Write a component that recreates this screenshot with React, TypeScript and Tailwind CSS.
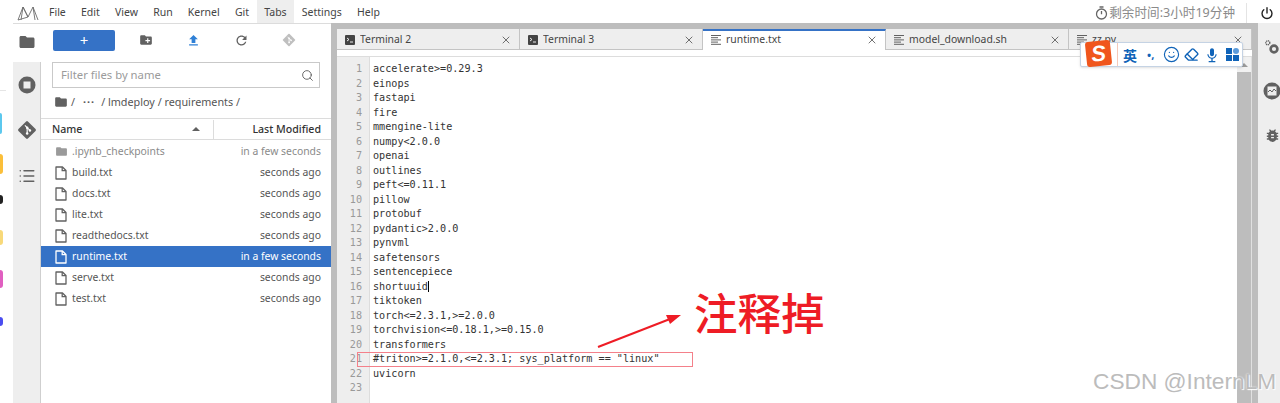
import { Eraser, List, Search, Smile, X } from 'lucide-react';

const sans = '[font-family:"Noto_Sans","Noto_Sans_CJK_SC",sans-serif]';

const menus = ['File', 'Edit', 'View', 'Run', 'Kernel', 'Git', 'Tabs', 'Settings', 'Help'];

const files = [
  { name: '.ipynb_checkpoints', time: 'in a few seconds', folder: true },
  { name: 'build.txt', time: 'seconds ago' },
  { name: 'docs.txt', time: 'seconds ago' },
  { name: 'lite.txt', time: 'seconds ago' },
  { name: 'readthedocs.txt', time: 'seconds ago' },
  { name: 'runtime.txt', time: 'in a few seconds', active: true },
  { name: 'serve.txt', time: 'seconds ago' },
  { name: 'test.txt', time: 'seconds ago' },
];

const lines = [
  'accelerate>=0.29.3', 'einops', 'fastapi', 'fire', 'mmengine-lite', 'numpy<2.0.0', 'openai', 'outlines',
  'peft<=0.11.1', 'pillow', 'protobuf', 'pydantic>2.0.0', 'pynvml', 'safetensors', 'sentencepiece', 'shortuuid',
  'tiktoken', 'torch<=2.3.1,>=2.0.0', 'torchvision<=0.18.1,>=0.15.0', 'transformers',
  '#triton>=2.1.0,<=2.3.1; sys_platform == "linux"', 'uvicorn', '',
];

const tabs = [
  { name: 'Terminal 2', terminal: true },
  { name: 'Terminal 3', terminal: true },
  { name: 'runtime.txt', active: true },
  { name: 'model_download.sh' },
  { name: 'zz.py' },
];

function Mat({ d, size = 16, className = '' }: { d: string; size?: number; className?: string }) {
  return (
    <svg width={size} height={size} viewBox="0 0 24 24" fill="currentColor" className={className}>
      <path d={d} />
    </svg>
  );
}

const folderPath = 'M10 4H4c-1.1 0-1.99.9-1.99 2L2 18c0 1.1.9 2 2 2h16c1.1 0 2-.9 2-2V8c0-1.1-.9-2-2-2h-8l-2-2z';
const newFolderPath = 'M20 6h-8l-2-2H4c-1.11 0-1.99.89-1.99 2L2 18c0 1.11.89 2 2 2h16c1.11 0 2-.89 2-2V8c0-1.11-.89-2-2-2zm-1 8h-3v3h-2v-3h-3v-2h3V9h2v3h3v2z';
const uploadPath = 'M9 16h6v-6h4l-7-7-7 7h4zm-4 2h14v2H5z';
const refreshPath = 'M17.65 6.35C16.2 4.9 14.21 4 12 4c-4.42 0-7.99 3.58-7.99 8s3.57 8 7.99 8c3.73 0 6.84-2.55 7.73-6h-2.08c-.82 2.33-3.04 4-5.65 4-3.31 0-6-2.69-6-6s2.69-6 6-6c1.66 0 3.14.69 4.22 1.78L13 11h7V4l-2.35 2.35z';
const bugPath = 'M20 8h-2.81c-.45-.78-1.07-1.45-1.82-1.96L17 4.41 15.59 3l-2.17 2.17C12.96 5.06 12.49 5 12 5c-.49 0-.96.06-1.41.17L8.41 3 7 4.41l1.62 1.63C7.88 6.55 7.26 7.22 6.81 8H4v2h2.09c-.05.33-.09.66-.09 1v1H4v2h2v1c0 .34.04.67.09 1H4v2h2.81c1.04 1.79 2.97 3 5.19 3s4.15-1.21 5.19-3H20v-2h-2.09c.05-.33.09-.66.09-1v-1h2v-2h-2v-1c0-.34-.04-.67-.09-1H20V8zm-6 8h-4v-2h4v2zm0-4h-4v-2h4v2z';
const micPath = 'M12 14c1.66 0 3-1.34 3-3V5c0-1.66-1.34-3-3-3S9 3.34 9 5v6c0 1.66 1.34 3 3 3zm5.3-3c0 3-2.54 5.1-5.3 5.1S6.7 14 6.7 11H5c0 3.41 2.72 6.23 6 6.72V21H7v2h10v-2h-4v-3.28c3.28-.49 6-3.31 6-6.72h-1.7z';

function GitIcon({ size = 20, color = '#616161' }: { size?: number; color?: string }) {
  return (
    <svg width={size} height={size} viewBox="0 0 24 24">
      <rect x="4" y="4" width="16" height="16" rx="1.5" fill={color} transform="rotate(45 12 12)" />
      <path d="M9.5 6.5l6 6M12.2 9.2v7" stroke="#fff" strokeWidth="1.4" />
      <circle cx="12.2" cy="9.2" r="1.5" fill="#fff" />
      <circle cx="15.5" cy="12.5" r="1.5" fill="#fff" />
      <circle cx="12.2" cy="16.2" r="1.5" fill="#fff" />
    </svg>
  );
}

function FileIcon({ active }: { active?: boolean }) {
  return (
    <svg width="12" height="14" viewBox="0 0 12 14" fill="none" stroke={active ? '#fff' : '#616161'} strokeWidth="1.3" className="shrink-0">
      <path d="M1 1h6.5L11 4.5V13H1z" strokeLinejoin="round" />
      <path d="M7.2 1v3.6H11" />
    </svg>
  );
}

function LinesIcon() {
  return (
    <svg width="10" height="10" viewBox="0 0 10 10" stroke="#616161" strokeWidth="1" className="shrink-0">
      <path d="M0 .5h10M0 2.7h7M0 4.9h10M0 7.1h7M0 9.3h10" />
    </svg>
  );
}

function TerminalIcon() {
  return (
    <svg width="10" height="10" viewBox="0 0 10 10" className="shrink-0">
      <rect width="10" height="10" rx="1" fill="#444" />
      <path d="M2 3l2 1.5L2 6M5 7h3" stroke="#fff" strokeWidth="0.9" fill="none" />
    </svg>
  );
}

function TabItem({ name, terminal, active }: { name: string; terminal?: boolean; active?: boolean }) {
  return (
    <div className={`flex h-[21px] w-[183px] shrink-0 items-center gap-[5px] border-r border-[#c4c4c4] pl-[8px] pr-[7px] text-[10.4px] ${active ? 'border-t-2 border-t-[#3572c6] bg-white pb-[1px]' : 'border-b border-b-[#c4c4c4] bg-[#eeeeee] pt-[1px]'}`}>
      {terminal ? <TerminalIcon /> : <LinesIcon />}
      <span className="flex-1 truncate text-[#444]">{name}</span>
      <X size={12} strokeWidth={1.5} className="text-[#444]" />
    </div>
  );
}

function Sogou() {
  return (
    <div className="absolute left-[1080px] top-[42px] flex h-[25px] w-[163px] items-center rounded-[2px] border border-[#c5d3e4] bg-white shadow-sm">
      <div className="-mt-[2px] ml-[5px] flex h-[25px] w-[25px] shrink-0 -rotate-6 items-center justify-center rounded-[3px] bg-[#f0561d] text-[22px] font-bold italic leading-none text-white [font-family:'Liberation_Sans',sans-serif]">S</div>
      <div className="ml-[6px] h-[23px] w-px shrink-0 bg-[#f5c9b8]" />
      <span className="ml-[5px] text-[14px] font-bold leading-none text-[#0f63b8] [font-family:'Noto_Sans_CJK_SC',sans-serif]">英</span>
      <span className="ml-[10px] w-[8px] text-[11px] font-bold leading-none text-[#0f63b8]">•,</span>
      <Smile size={17} strokeWidth={1.6} className="ml-[8px] shrink-0 text-[#0f63b8]" />
      <Eraser size={15} strokeWidth={2.2} className="ml-[4px] shrink-0 text-[#0f63b8]" />
      <Mat d={micPath} size={16} className="ml-[5px] shrink-0 text-[#0f63b8]" />
      <div className="ml-[6px] grid shrink-0 grid-cols-2 gap-px">
        <div className="h-[6px] w-[6px] bg-[#0f63b8]" />
        <div className="h-[6px] w-[6px] rounded-full bg-[#5b9bdb]" />
        <div className="h-[6px] w-[6px] bg-[#0f63b8]" />
        <div className="h-[6px] w-[6px] bg-[#0f63b8]" />
      </div>
    </div>
  );
}

export default function App() {
  return (
    <div className={`relative flex h-[403px] w-[1280px] overflow-hidden bg-white ${sans}`}>
      {/* desktop icons clipped at the edge */}
      <div className="flex w-[13px] shrink-0 flex-col items-start">
        <div className="mt-[90px] h-px w-[6px] bg-[#e5e5e5]" />
        <div className="mt-[22px] h-[21px] w-[2px] rounded-r bg-[#5cc8ee]" />
        <div className="mt-[20px] h-[20px] w-[3px] rounded-r bg-[#fbbf3a]" />
        <div className="mt-[21px] h-[9px] w-[3px] rounded-r bg-[#222]" />
        <div className="mt-[26px] h-[15px] w-[3px] rounded-r bg-[#f8d97a]" />
        <div className="mt-[25px] h-[18px] w-[3px] rounded-r bg-[#e05fc0]" />
        <div className="mt-[29px] h-[9px] w-[3px] rounded-r bg-[#4a4df0]" />
      </div>

      <div className="flex w-[1267px] shrink-0 flex-col">
        {/* top bar */}
        <div className="flex h-[23px] w-[1267px] shrink-0 items-center pr-[4px] text-[#9a9a9a]">
          <svg width="22" height="16" viewBox="0 0 22 16" fill="none" stroke="#6b6b6b" strokeWidth="0.9" className="ml-[4px] mt-[2px]">
            <path d="M1 15L6 2l5 10 5-10 5 13M6 2l-2 13M16 2l2 13M6 2l5 10M1 15l10-3" />
          </svg>
          <div className="ml-[2.4px] flex h-full items-stretch text-[10.5px] text-[#444]">
            {menus.map((m) => (
              <div key={m} className={`flex items-center px-[7.6px] pt-[3px] ${m === 'Tabs' ? 'bg-[#eeeeee]' : ''}`}>{m}</div>
            ))}
          </div>
          <div className="ml-auto mt-[3px] flex items-center">
            <svg width="13" height="14" viewBox="0 0 13 14" fill="none" stroke="#666" strokeWidth="1.3">
              <circle cx="6.5" cy="8" r="5" />
              <path d="M6.5 5v3.2M4.5 1h4" />
            </svg>
            <span className="ml-[1px] text-[12.6px] text-[#8a8a8a]">剩余时间:3小时19分钟</span>
            <div className="ml-[11px] h-[20px] w-px bg-[#e4e4e4]" />
            <svg width="14" height="14" viewBox="0 0 24 24" fill="none" stroke="#222" strokeWidth="2.4" strokeLinecap="round" className="ml-[13px] mr-[2px]">
              <path d="M12 3v9M6.5 6.5a8.5 8.5 0 1 0 11 0" />
            </svg>
          </div>
        </div>

        <div className="flex min-h-0 flex-1">
          {/* left sidebar */}
          <div className="flex w-[28px] shrink-0 flex-col border-t border-[#dcdcdc] bg-[#eeeeee]">
            <div className="flex h-[38px] items-center justify-center bg-white pb-[3px] text-[#616161]">
              <Mat d={folderPath} size={18} />
            </div>
            <div className="flex flex-1 flex-col items-center border-r border-[#cfcfcf]">
              <svg width="18" height="18" viewBox="0 0 18 18" className="mt-[14px]">
                <circle cx="9" cy="9" r="8.5" fill="#616161" />
                <rect x="5.5" y="5.5" width="7" height="7" fill="#eeeeee" />
              </svg>
              <div className="mt-[26px] flex"><GitIcon /></div>
              <List size={18} strokeWidth={2} className="mt-[27px] text-[#616161]" />
            </div>
          </div>

          {/* file browser */}
          <div className="flex w-[290px] shrink-0 flex-col border-t border-[#dcdcdc] bg-white">
            <div className="flex h-[38px] shrink-0 items-start pl-[12px] pt-[6px]">
              <div className="flex h-[21px] w-[62px] items-center justify-center rounded-[2px] bg-[#3572c6] text-[15px] leading-none text-white">+</div>
              <Mat d={newFolderPath} size={14} className="ml-[24px] mt-[3px] text-[#616161]" />
              <Mat d={uploadPath} size={15} className="ml-[33px] mt-[3px] text-[#2f80d6]" />
              <Mat d={refreshPath} size={15} className="ml-[33px] mt-[3px] text-[#616161]" />
              <div className="ml-[33px] mt-[3px] flex opacity-40"><GitIcon size={14} /></div>
            </div>
            <div className="mx-[11px] flex h-[26px] shrink-0 items-center justify-between border border-[#c9c9c9] pl-[8px] pr-[5px]">
              <span className="text-[11.3px] text-[#9b9b9b]">Filter files by name</span>
              <Search size={13} strokeWidth={1.6} className="text-[#555]" />
            </div>
            <div className="flex h-[30px] shrink-0 items-center pb-[2px] pl-[13px] text-[10.8px] text-[#555]">
              <Mat d={folderPath} size={14} className="text-[#616161]" />
              <span className="ml-[3px]">/</span>
              <span className="ml-[8px] font-bold tracking-[1px]">···</span>
              <span className="ml-[6px] whitespace-pre">/ lmdeploy / requirements /</span>
            </div>
            <div className="flex h-[22px] shrink-0 items-stretch border-y border-[#dcdcdc] pt-[1px] text-[10.6px] font-medium text-[#333]">
              <div className="flex w-[173px] items-center justify-between border-r border-[#dcdcdc] pl-[11px] pr-[13px]">
                <span>Name</span>
                <span className="mb-[2px] h-0 w-0 border-x-[4px] border-b-[4px] border-x-transparent border-b-[#616161]" />
              </div>
              <div className="flex flex-1 items-center justify-end pr-[10px]">Last Modified</div>
            </div>
            <div className="flex flex-col pt-[1px] text-[10.4px]">
              {files.map((f) => (
                <div key={f.name} className={`flex h-[21px] items-center pl-[14px] pr-[10px] ${f.active ? 'bg-[#3572c6] text-white' : f.folder ? 'text-[#8a8a8a]' : 'text-[#555]'}`}>
                  <div className="flex w-[17px] shrink-0">
                    {f.folder ? <Mat d={folderPath} size={13} className="text-[#9a9a9a]" /> : <FileIcon active={f.active} />}
                  </div>
                  <span className="flex-1 truncate">{f.name}</span>
                  <span>{f.time}</span>
                </div>
              ))}
            </div>
          </div>

          {/* splitter */}
          <div className="w-[6px] shrink-0 bg-[#bdbdbd]" />

          {/* main area */}
          <div className="flex w-[915px] shrink-0 flex-col bg-white">
            <div className="h-[6px] shrink-0 bg-[#bdbdbd]" />
            <div className="flex shrink-0">
              {tabs.map((t) => <TabItem key={t.name} {...t} />)}
            </div>
            <div className="h-[7px] shrink-0 border-b border-[#dddddd] bg-white" />
            <div className="flex min-h-0 flex-1">
              <div className="flex w-[33px] shrink-0 flex-col items-end border-r border-[#dddddd] bg-[#eeeeee] pr-[7px] pt-[5px] text-[10.15px] leading-[14.5px] text-[#999] [font-family:'DejaVu_Sans_Mono',monospace]">
                {lines.map((_, i) => <div key={i} className="h-[14.5px]">{i + 1}</div>)}
              </div>
              <div className="flex-1 pl-[3px] pt-[5px] text-[10.15px] leading-[14.5px] text-[#333] [font-family:'DejaVu_Sans_Mono',monospace]">
                {lines.map((l, i) => (
                  <div key={i} className="h-[14.5px] whitespace-pre">
                    {l}
                    {l === 'shortuuid' && <span className="border-l border-black" />}
                  </div>
                ))}
              </div>
              <div className="flex w-[14px] shrink-0 flex-col">
                <div className="flex h-[15px] items-center justify-center bg-[#f1f1f1]">
                  <span className="h-0 w-0 border-x-[4px] border-b-[4px] border-x-transparent border-b-[#9a9a9a]" />
                </div>
                <div className="flex-1 bg-[#bdbdbd]" />
              </div>
              <div className="w-px shrink-0 bg-[#e0e0e0]" />
            </div>
          </div>

          {/* splitter and right sidebar, which runs past the window edge */}
          <div className="w-[6px] shrink-0 bg-[#bdbdbd]" />
          <div className="flex w-[28px] shrink-0 flex-col items-center bg-[#eeeeee] text-[#616161]">
            <svg width="16" height="16" viewBox="0 0 16 16" fill="none" stroke="#616161" className="mt-[16px]">
              <circle cx="3.8" cy="3.8" r="2" strokeWidth="1.4" strokeDasharray="1.1 0.6" />
              <circle cx="10" cy="10" r="3.4" strokeWidth="2.6" />
            </svg>
            <svg width="18" height="18" viewBox="0 0 18 18" className="mt-[27px]">
              <circle cx="9" cy="9" r="8.5" fill="#616161" />
              <rect x="4.5" y="4.5" width="9" height="9" fill="#eeeeee" />
              <path d="M5 10l2-2 2 2 2-3 2 2" stroke="#616161" fill="none" />
            </svg>
            <Mat d={bugPath} size={17} className="mt-[27px]" />
          </div>
        </div>
      </div>

      <Sogou />

      {/* screenshot annotations */}
      <div className="absolute left-[357px] top-[352px] h-[14.5px] w-[336px] border border-[#f4808a]" />
      <svg width="100" height="50" viewBox="0 0 100 50" className="absolute left-[590px] top-[308px]">
        <path d="M8 39L80 11" stroke="#ee1c25" strokeWidth="2" />
        <path d="M91 7L76 7l4 9z" fill="#ee1c25" />
      </svg>
      <div className="absolute left-[694px] top-[282px] text-[43.5px] font-medium leading-[60px] text-[#ee1c25] [font-family:'Noto_Sans_CJK_SC',sans-serif]">注释掉</div>
      <div className="absolute left-[1093px] top-[366px] text-[22.7px] leading-[30px] text-[#bcbcbc] [font-family:'Liberation_Sans',sans-serif] [text-shadow:0_0_2px_#ffffff,1px_1px_1px_#ffffff]">CSDN @InternLM</div>
    </div>
  );
}
